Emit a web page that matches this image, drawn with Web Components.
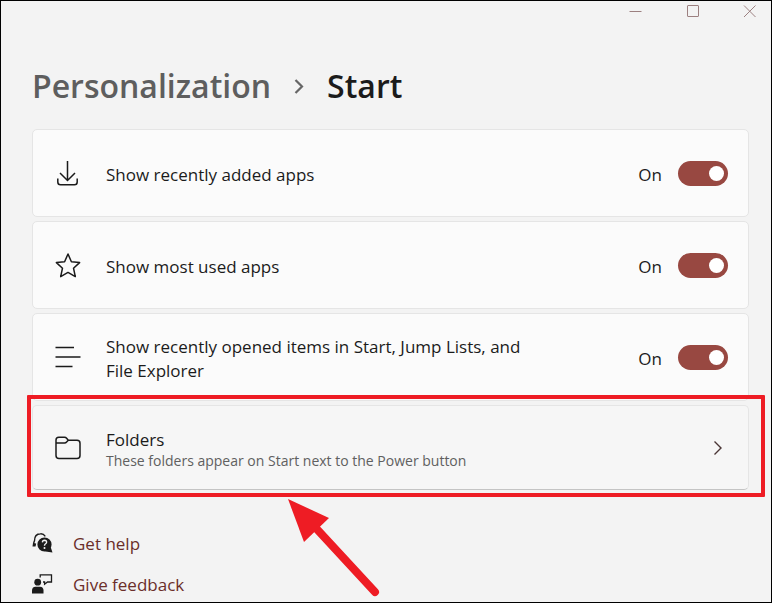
<!DOCTYPE html>
<html lang="en">
<head>
<meta charset="UTF-8">
<meta name="viewport" content="width=device-width, initial-scale=1.0">
<title>Personalization - Start</title>
<style>
    body {
        margin: 0;
        background-color: #f3f3f3;
        color: #1b1b1b;
        font-family: "Open Sans", "Noto Sans", sans-serif;
        font-size: 17px;
        line-height: 24px;
    }
</style>
</head>
<body>
<settings-window>
    <window-controls slot="controls"></window-controls>
    <page-heading slot="heading" parent="Personalization" current="Start"></page-heading>

    <toggle-card label="Show recently added apps">
        <svg width="26" height="26" viewBox="0 0 26 26" fill="none" stroke="#1b1b1b" stroke-width="1.5">
            <path d="M12.5 1V20M5 13L12.5 20.5L20 13M2.8 18.5V22Q2.8 24.8 5.5 24.8H19.5Q22.2 24.8 22.2 22V18.5"/>
        </svg>
    </toggle-card>
    <toggle-card label="Show most used apps">
        <svg width="26" height="26" viewBox="0 0 26 26" fill="none" stroke="#1b1b1b" stroke-width="1.5" stroke-linejoin="round">
            <path d="M13 2L16.4 9.7L24.6 10.6L18.5 16.2L20.3 24.6L13 20.4L5.7 24.6L7.5 16.2L1.4 10.6L9.6 9.7Z"/>
        </svg>
    </toggle-card>
    <toggle-card label="Show recently opened items in Start, Jump Lists, and File Explorer">
        <svg width="26" height="26" viewBox="0 0 26 26" fill="none" stroke="#1b1b1b" stroke-width="1.5">
            <path d="M0.5 3.5H19M0.5 13H25.5M0.5 22.5H17.5"/>
        </svg>
    </toggle-card>
    <callout-box>
        <link-card href="#folders">
            <svg slot="icon" width="26" height="26" viewBox="0 0 26 26" fill="none" stroke="#1b1b1b" stroke-width="1.5">
                <path d="M1 20.5V5Q1 2.2 3.8 2.2H9.5Q10.8 2.2 11.6 3.2L13.3 5.3H22Q25 5.3 25 8.3V20.5Q25 23.5 22 23.5H4Q1 23.5 1 20.5ZM1 8H9.5Q10.8 8 11.6 7L13.3 5.3"/>
            </svg>
            Folders
            <span slot="description">These folders appear on Start next to the Power button</span>
        </link-card>
    </callout-box>

    <help-link slot="footer" href="#help">
        <svg slot="icon" width="22" height="22" viewBox="0 0 22 22">
            <path d="M2 12Q1.2 10 2.5 7.8Q2.5 1 8.5 0.8Q11.5 0.6 13.3 3.4" fill="none" stroke="#1b1b1b" stroke-width="1.4"/>
            <path d="M1 10L4.2 10.5L3.5 13.5H0.5Z" fill="#1b1b1b"/>
            <path d="M12.5 4.4A7 7 0 1 1 12.5 18.6A7 7 0 1 1 12.5 4.4ZM18.5 13.5L20.5 19.4L13.5 18.4Z" fill="#1b1b1b"/>
            <path d="M10.4 9.4Q10.5 7.3 12.5 7.3Q14.6 7.4 14.6 9.2Q14.5 10.3 13.3 11Q12.5 11.5 12.5 12.8" fill="none" stroke="#f3f3f3" stroke-width="1.4"/>
            <circle cx="12.5" cy="15" r="1" fill="#f3f3f3"/>
        </svg>
        Get help
    </help-link>
    <help-link slot="footer" href="#feedback">
        <svg slot="icon" width="22" height="22" viewBox="0 0 22 22">
            <circle cx="5.7" cy="8.2" r="3.4" fill="#1b1b1b"/>
            <path d="M0 19.5V16.5Q0 12.7 3.5 12.7H8Q11.5 12.7 11.5 16.5V19.5Z" fill="#1b1b1b"/>
            <path d="M8.2 3.5V0.8H19.5V8H15.5L12.6 10.2V8H11" fill="none" stroke="#1b1b1b" stroke-width="1.3"/>
        </svg>
        Give feedback
    </help-link>
</settings-window>

<script>
class SettingsWindow extends HTMLElement {
    constructor() {
        super();
        this.attachShadow({ mode: 'open' });
    }

    connectedCallback() {
        this.shadowRoot.innerHTML = `
            <style>
                :host {
                    display: block;
                    box-sizing: border-box;
                    height: 100vh;
                    overflow: hidden;
                    border: 1px solid #000;
                }
                main {
                    padding: 41px 22px 0 31px;
                }
                .cards {
                    display: flex;
                    flex-direction: column;
                    gap: 4px;
                    margin-top: 20px;
                }
                footer {
                    display: flex;
                    flex-direction: column;
                    align-items: flex-start;
                    gap: 17px;
                    margin-top: 42px;
                }
            </style>
            <slot name="controls"></slot>
            <main>
                <slot name="heading"></slot>
                <div class="cards"><slot></slot></div>
                <footer><slot name="footer"></slot></footer>
            </main>
        `;
    }
}

class WindowControls extends HTMLElement {
    constructor() {
        super();
        this.attachShadow({ mode: 'open' });
    }

    connectedCallback() {
        this.shadowRoot.innerHTML = `
            <style>
                :host {
                    display: flex;
                    justify-content: flex-end;
                    height: 21px;
                    margin-right: -7px;
                }
                button {
                    display: grid;
                    place-items: center;
                    width: 57px;
                    padding: 0;
                    border: 0;
                    background: none;
                }
                svg {
                    fill: none;
                    stroke: #9c8080;
                }
            </style>
            <button aria-label="Minimize"><svg width="13" height="13"><path d="M0.5 6.5H12.5"/></svg></button>
            <button aria-label="Maximize"><svg width="13" height="13"><rect x="1.5" y="0.5" width="11" height="11" rx="0.5"/></svg></button>
            <button aria-label="Close"><svg width="13" height="13"><path d="M1 0.5L12.5 12M12.5 0.5L1 12"/></svg></button>
        `;
    }
}

class PageHeading extends HTMLElement {
    constructor() {
        super();
        this.attachShadow({ mode: 'open' });
    }

    connectedCallback() {
        this.shadowRoot.innerHTML = `
            <style>
                :host {
                    display: block;
                }
                h1 {
                    display: flex;
                    align-items: center;
                    margin: 0;
                    font-size: 32px;
                    font-weight: 600;
                    line-height: 46px;
                }
                a {
                    color: #5e5e5e;
                    text-decoration: none;
                }
                svg {
                    margin: 0 22px;
                }
            </style>
            <h1>
                <a href="#personalization">${this.getAttribute('parent')}</a>
                <svg width="12" height="16" viewBox="0 0 12 16" fill="none" stroke="#666" stroke-width="2.2"><path d="M2.5 2L9 8.5L2.5 15"/></svg>
                <span>${this.getAttribute('current')}</span>
            </h1>
        `;
    }
}

class ToggleCard extends HTMLElement {
    constructor() {
        super();
        this.attachShadow({ mode: 'open' });
    }

    connectedCallback() {
        this.shadowRoot.innerHTML = `
            <style>
                :host {
                    display: flex;
                    align-items: center;
                    box-sizing: border-box;
                    min-height: 88px;
                    padding: 16px 20px 16px 22px;
                    border: 1px solid #e5e5e5;
                    border-radius: 5px;
                    background-color: #fbfbfb;
                }
                .icon {
                    display: flex;
                    margin-right: 25px;
                }
                .text {
                    flex: 1;
                }
                .text, .state {
                    padding-top: 3px;
                }
                label {
                    display: block;
                    max-width: 420px;
                }
                input {
                    appearance: none;
                    display: flex;
                    align-items: center;
                    justify-content: flex-end;
                    box-sizing: border-box;
                    width: 50px;
                    height: 25px;
                    margin: 0 0 0 16px;
                    padding: 0 4px;
                    border-radius: 13px;
                    background-color: #984841;
                }
                input::before {
                    content: "";
                    width: 15px;
                    height: 15px;
                    border-radius: 50%;
                    background-color: #fff;
                }
                input:not(:checked) {
                    justify-content: flex-start;
                    background-color: #8a8a8a;
                }
            </style>
            <div class="icon"><slot></slot></div>
            <div class="text"><label for="toggle">${this.getAttribute('label')}</label></div>
            <span class="state">On</span>
            <input type="checkbox" role="switch" id="toggle" checked>
        `;

        const input = this.shadowRoot.querySelector('input');
        input.addEventListener('change', () => {
            this.shadowRoot.querySelector('.state').textContent = input.checked ? 'On' : 'Off';
        });
    }
}

class LinkCard extends HTMLElement {
    constructor() {
        super();
        this.attachShadow({ mode: 'open' });
    }

    connectedCallback() {
        this.shadowRoot.innerHTML = `
            <style>
                :host {
                    display: block;
                }
                a {
                    display: flex;
                    align-items: center;
                    box-sizing: border-box;
                    min-height: 85px;
                    padding: 16px 24px 16px 22px;
                    border: 1px solid #e5e5e5;
                    border-bottom-color: #c4c4c4;
                    border-radius: 5px;
                    background-color: #f6f6f6;
                    color: inherit;
                    text-decoration: none;
                }
                .icon {
                    display: flex;
                    margin-right: 25px;
                }
                .text {
                    flex: 1;
                    padding-top: 3px;
                }
                .description {
                    color: #606060;
                    font-size: 14px;
                    line-height: 18px;
                }
            </style>
            <a href="${this.getAttribute('href')}">
                <div class="icon"><slot name="icon"></slot></div>
                <div class="text">
                    <div><slot></slot></div>
                    <div class="description"><slot name="description"></slot></div>
                </div>
                <svg width="12" height="16" viewBox="0 0 12 16" fill="none" stroke="#4a3535" stroke-width="1.4"><path d="M2.5 1.5L9 8L2.5 14.5"/></svg>
            </a>
        `;
    }
}

// Red frame and arrow drawn over the element inside it
class CalloutBox extends HTMLElement {
    constructor() {
        super();
        this.attachShadow({ mode: 'open' });
    }

    connectedCallback() {
        this.shadowRoot.innerHTML = `
            <style>
                :host {
                    display: block;
                    position: relative;
                }
                .frame {
                    position: absolute;
                    inset: -10px -16px -7px -5px;
                    border: 4px solid #ee1c24;
                    border-radius: 1px;
                    pointer-events: none;
                }
                .arrow {
                    position: absolute;
                    top: calc(100% + 8px);
                    left: 254px;
                    pointer-events: none;
                }
            </style>
            <slot></slot>
            <div class="frame"></div>
            <svg class="arrow" width="96" height="100" viewBox="0 0 96 100">
                <path d="M28 28L89 94" stroke="#ee1c24" stroke-width="8" stroke-linecap="round"/>
                <path d="M2 1L43 20L18 44Z" fill="#ee1c24"/>
            </svg>
        `;
    }
}

class HelpLink extends HTMLElement {
    constructor() {
        super();
        this.attachShadow({ mode: 'open' });
    }

    connectedCallback() {
        this.shadowRoot.innerHTML = `
            <style>
                :host {
                    display: block;
                }
                a {
                    display: flex;
                    align-items: center;
                    gap: 19px;
                    color: #6b2e2a;
                    text-decoration: none;
                }
                .icon {
                    display: flex;
                }
            </style>
            <a href="${this.getAttribute('href')}">
                <span class="icon"><slot name="icon"></slot></span>
                <span><slot></slot></span>
            </a>
        `;
    }
}

customElements.define('settings-window', SettingsWindow);
customElements.define('window-controls', WindowControls);
customElements.define('page-heading', PageHeading);
customElements.define('toggle-card', ToggleCard);
customElements.define('link-card', LinkCard);
customElements.define('callout-box', CalloutBox);
customElements.define('help-link', HelpLink);
</script>
</body>
</html>
